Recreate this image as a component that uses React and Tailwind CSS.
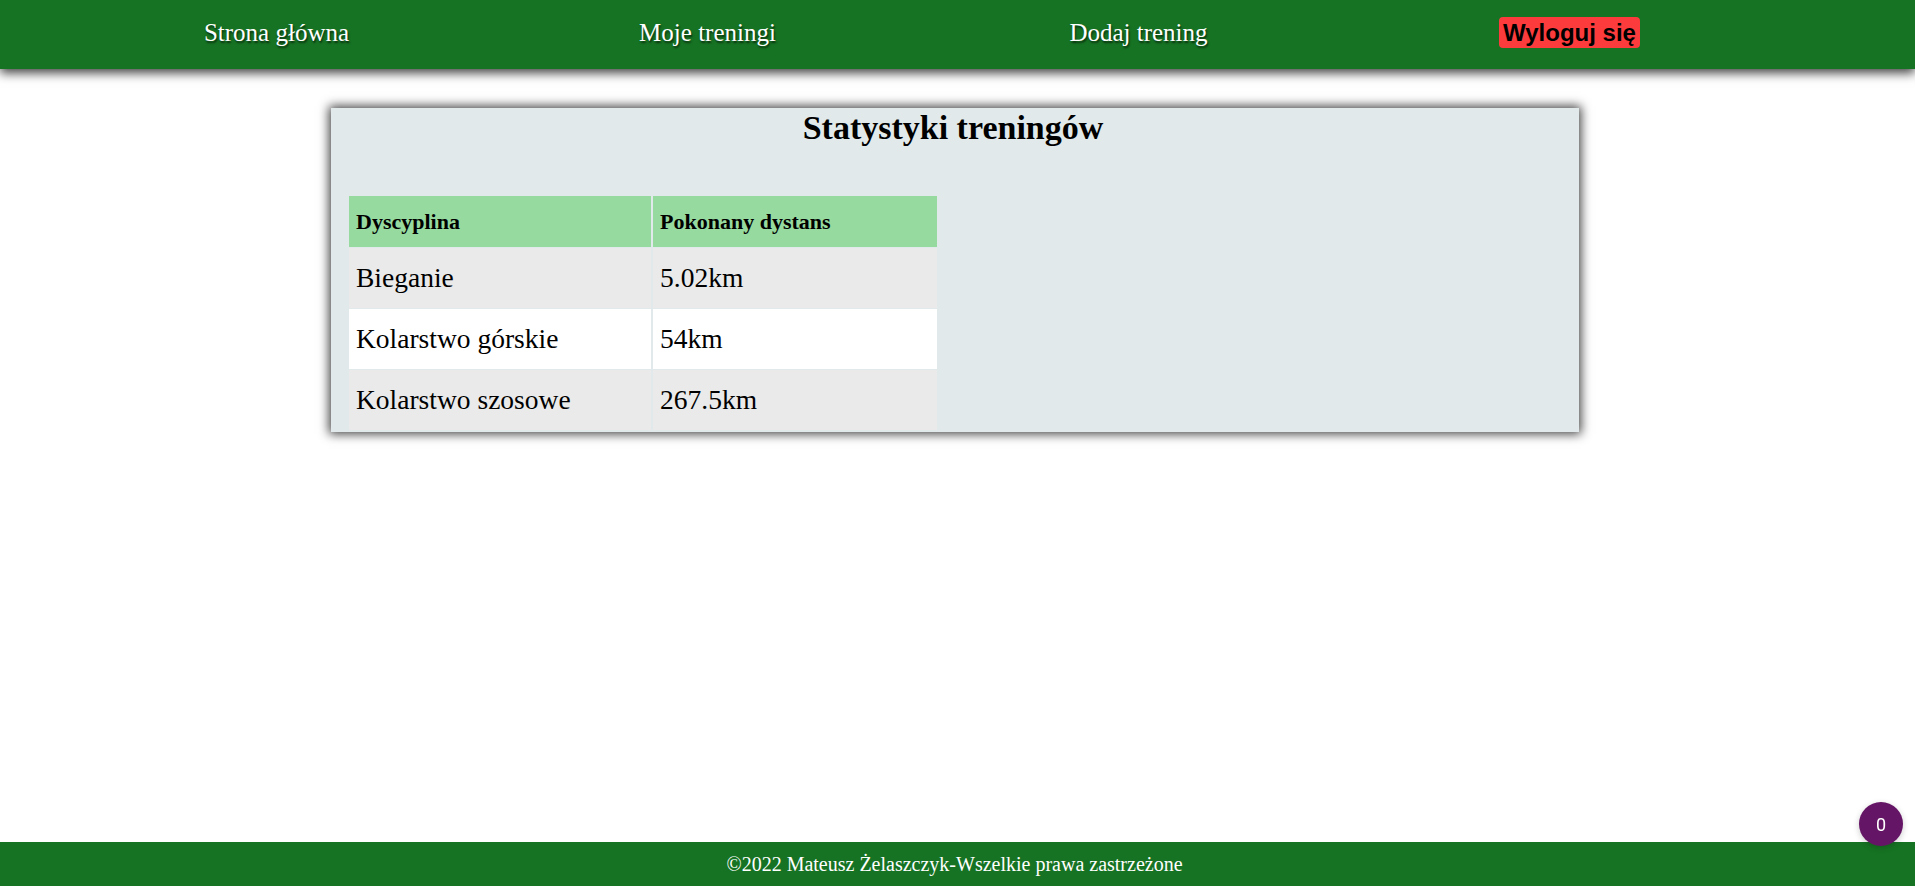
import React from "react";

const serif = "font-['Liberation_Serif','Times_New_Roman',serif]";

const rows = [
  { name: "Bieganie", dist: "5.02km", bg: "bg-[#eaeaea]" },
  { name: "Kolarstwo górskie", dist: "54km", bg: "bg-white" },
  { name: "Kolarstwo szosowe", dist: "267.5km", bg: "bg-[#eaeaea]" },
];

export default function App() {
  return (
    <div className={`min-h-screen flex flex-col bg-white ${serif}`}>
      <nav className="h-[69px] bg-[#167323] shadow-[0_4px_10px_rgba(0,0,0,0.75)] relative z-10">
        <ul className="h-full grid grid-cols-[431px_431px_431px_431px] pl-[61px] items-center pb-[4px]">
          <li className="text-center text-white text-[25px] leading-none [text-shadow:1px_2px_2px_rgba(0,0,0,0.6)]">
            Strona główna
          </li>
          <li className="text-center text-white text-[25px] leading-none [text-shadow:1px_2px_2px_rgba(0,0,0,0.6)]">
            Moje treningi
          </li>
          <li className="text-center text-white text-[25px] leading-none [text-shadow:1px_2px_2px_rgba(0,0,0,0.6)]">
            Dodaj trening
          </li>
          <li className="flex justify-center">
            <span className="bg-[#fc3c3c] rounded-[4px] px-[4px] py-[2px] text-black font-bold text-[24px] font-['Liberation_Sans',Arial,sans-serif] leading-[27px]">
              Wyloguj się
            </span>
          </li>
        </ul>
      </nav>

      <main className="flex-1 pt-[39px]">
        <section className="ml-[331px] w-[1248px] bg-[#e1e9eb] shadow-[0_0_10px_2px_rgba(0,0,0,0.75)] pl-[18px] pb-[2px]">
          <h1 className="pr-[22px] text-center text-black font-bold text-[34px] leading-[40px]">
            Statystyki treningów
          </h1>
          <div className="mt-[48px] w-[588px] grid grid-cols-[302px_284px] gap-x-[2px] gap-y-[1px]">
            <div className="h-[51px] bg-[#96da9f] flex items-center px-[7px] font-bold text-[22px] text-black">
              Dyscyplina
            </div>
            <div className="h-[51px] bg-[#96da9f] flex items-center px-[7px] font-bold text-[22px] text-black">
              Pokonany dystans
            </div>
            {rows.map((r) => (
              <React.Fragment key={r.name}>
                <div className={`h-[60px] ${r.bg} flex items-center px-[7px] text-[27.5px] text-black`}>
                  {r.name}
                </div>
                <div className={`h-[60px] ${r.bg} flex items-center px-[7px] text-[27.5px] text-black`}>
                  {r.dist}
                </div>
              </React.Fragment>
            ))}
          </div>
        </section>
      </main>

      <footer className="h-[44px] bg-[#167323] flex items-center justify-center pr-[6px] text-white text-[20px]">
        ©2022 Mateusz Żelaszczyk-Wszelkie prawa zastrzeżone
      </footer>

      <div className="fixed left-[1859px] top-[802px] w-[44px] h-[44px] rounded-full bg-[#651565] shadow-[0_2px_6px_rgba(0,0,0,0.2)] flex items-center justify-center text-white text-[18px] font-['Roboto',sans-serif]">
        0
      </div>
    </div>
  );
}
